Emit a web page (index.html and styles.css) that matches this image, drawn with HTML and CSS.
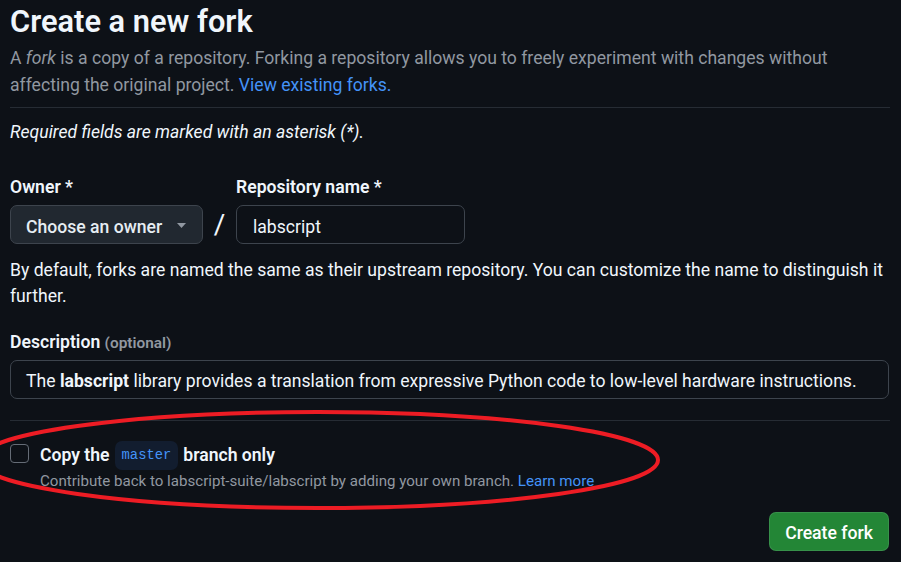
FILE: index.html
```html
<!DOCTYPE html>
<html lang="en">
<head>
<meta charset="utf-8">
<title>Create a new fork</title>
<link rel="stylesheet" href="styles.css">
</head>
<body>
<main class="page">
  <h1 class="title">Create a new fork</h1>
  <p class="intro">A <em>fork</em> is a copy of a repository. Forking a repository allows you to freely experiment with changes without affecting the original project. <a class="link" href="#">View existing forks.</a></p>
  <hr class="sep">
  <p class="required">Required fields are marked with an asterisk (*).</p>

  <div class="name-row">
    <div class="field owner-field">
      <label class="label">Owner *</label>
      <button class="select" type="button">
        <span>Choose an owner</span>
        <svg class="caret" width="9" height="5" viewBox="0 0 9 5"><path d="M0 0h9L4.5 5z" fill="#9198a1"/></svg>
      </button>
    </div>
    <span class="slash">/</span>
    <div class="field repo-field">
      <label class="label">Repository name *</label>
      <div class="input repo-input">labscript</div>
    </div>
  </div>

  <p class="note">By default, forks are named the same as their upstream repository. You can customize the name to distinguish it further.</p>

  <div class="field desc-field">
    <label class="label">Description <span class="optional">(optional)</span></label>
    <div class="input desc-input">The <strong>labscript</strong> library provides a translation from expressive Python code to low-level hardware instructions.</div>
  </div>

  <hr class="sep sep-2">

  <div class="check-row">
    <span class="checkbox"></span>
    <div class="check-body">
      <div class="check-label"><span>Copy the</span><code class="branch">master</code><span>branch only</span></div>
      <div class="check-note">Contribute back to labscript-suite/labscript by adding your own branch. <a class="link" href="#">Learn more</a></div>
    </div>
  </div>

  <div class="actions">
    <button class="btn-primary" type="button">Create fork</button>
  </div>

  <svg class="annotation" width="901" height="562" viewBox="0 0 901 562">
    <ellipse cx="318" cy="457" rx="340" ry="48" fill="none" stroke="#ed1c24" stroke-width="4"/>
  </svg>
</main>
</body>
</html>
```

FILE: styles.css
```css
* { box-sizing: border-box; }

html, body {
  margin: 0;
  background: #0d1117;
}

body {
  font-family: Roboto, "Liberation Sans", sans-serif;
  color: #f0f6fc;
  width: 901px;
  height: 562px;
  overflow: hidden;
}

.page {
  position: relative;
  padding: 0 11px 0 10px;
  width: 901px;
  height: 562px;
}

.title {
  margin: 3px 0 0;
  font-size: 30.8px;
  line-height: 38px;
  font-weight: 600;
  color: #f0f6fc;
}

.intro {
  margin: 3.5px 0 0;
  font-size: 17.6px;
  line-height: 27px;
  color: #9198a1;
}

.intro em { font-style: italic; }

.link {
  color: #4493f8;
  text-decoration: none;
}

.sep {
  margin: 8.5px 0 0;
  border: 0;
  height: 1px;
  background: #262c34;
}

.required {
  margin: 11px 0 0;
  font-size: 17.6px;
  line-height: 26px;
  font-style: italic;
  color: #f0f6fc;
}

.name-row {
  display: flex;
  align-items: flex-end;
  margin-top: 29px;
}

.field {
  display: flex;
  flex-direction: column;
  gap: 5px;
}

.label {
  font-size: 17.6px;
  line-height: 26px;
  font-weight: 600;
  color: #f0f6fc;
}

.select {
  display: flex;
  align-items: center;
  justify-content: space-between;
  width: 193px;
  height: 39px;
  padding: 5px 16px 0 15px;
  background: #212830;
  border: 1px solid #3d444d;
  border-radius: 7px;
  font-family: inherit;
  font-size: 17.6px;
  font-weight: 500;
  color: #e6edf3;
}

.caret { margin-top: -4px; }

.slash {
  width: 33px;
  text-align: center;
  font-size: 28px;
  line-height: 39px;
  color: #f0f6fc;
  height: 39px;
}

.input {
  height: 39px;
  border: 1px solid #3d444d;
  border-radius: 7px;
  padding: 4px 15px 0;
  font-size: 17.6px;
  line-height: 34px;
  color: #f0f6fc;
  white-space: nowrap;
  overflow: hidden;
}

.repo-input { width: 229px; padding-left: 16px; }

.note {
  margin: 13px 0 0;
  font-size: 17.6px;
  line-height: 26px;
  color: #f0f6fc;
}

.desc-field { margin-top: 20px; gap: 4px; }

.optional {
  font-size: 15.4px;
  font-weight: 600;
  color: #9198a1;
}

.desc-input { width: 879px; padding-top: 3px; }

.desc-input strong { font-weight: 700; }

.sep-2 { margin-top: 21px; }

.check-row {
  display: flex;
  align-items: flex-start;
  gap: 11px;
  margin-top: 20px;
}

.checkbox {
  flex: none;
  width: 19px;
  height: 19px;
  margin-top: 3px;
  border: 1px solid #656c76;
  border-radius: 4px;
  background: #0d1117;
}

.check-label {
  display: flex;
  align-items: center;
  gap: 5px;
  height: 29px;
  font-size: 17.6px;
  line-height: 29px;
  font-weight: 600;
  color: #f0f6fc;
}

.branch {
  display: inline-block;
  height: 29px;
  padding: 0 7px;
  border-radius: 7px;
  background: #121d2f;
  font-family: "Liberation Mono", "DejaVu Sans Mono", monospace;
  font-size: 13.8px;
  font-weight: 400;
  line-height: 29px;
  color: #4493f8;
}

.check-note {
  font-size: 15.1px;
  line-height: 22px;
  color: #9198a1;
}

.actions {
  display: flex;
  justify-content: flex-end;
  margin-top: 20px;
  padding-right: 1px;
}

.btn-primary {
  height: 39px;
  width: 120px;
  padding: 3px 15px 0;
  background: #238636;
  border: 1px solid rgba(240, 246, 252, 0.1);
  border-radius: 7px;
  font-family: inherit;
  font-size: 17.6px;
  font-weight: 500;
  color: #ffffff;
}

.annotation {
  position: absolute;
  left: 0;
  top: 0;
  pointer-events: none;
}
```
